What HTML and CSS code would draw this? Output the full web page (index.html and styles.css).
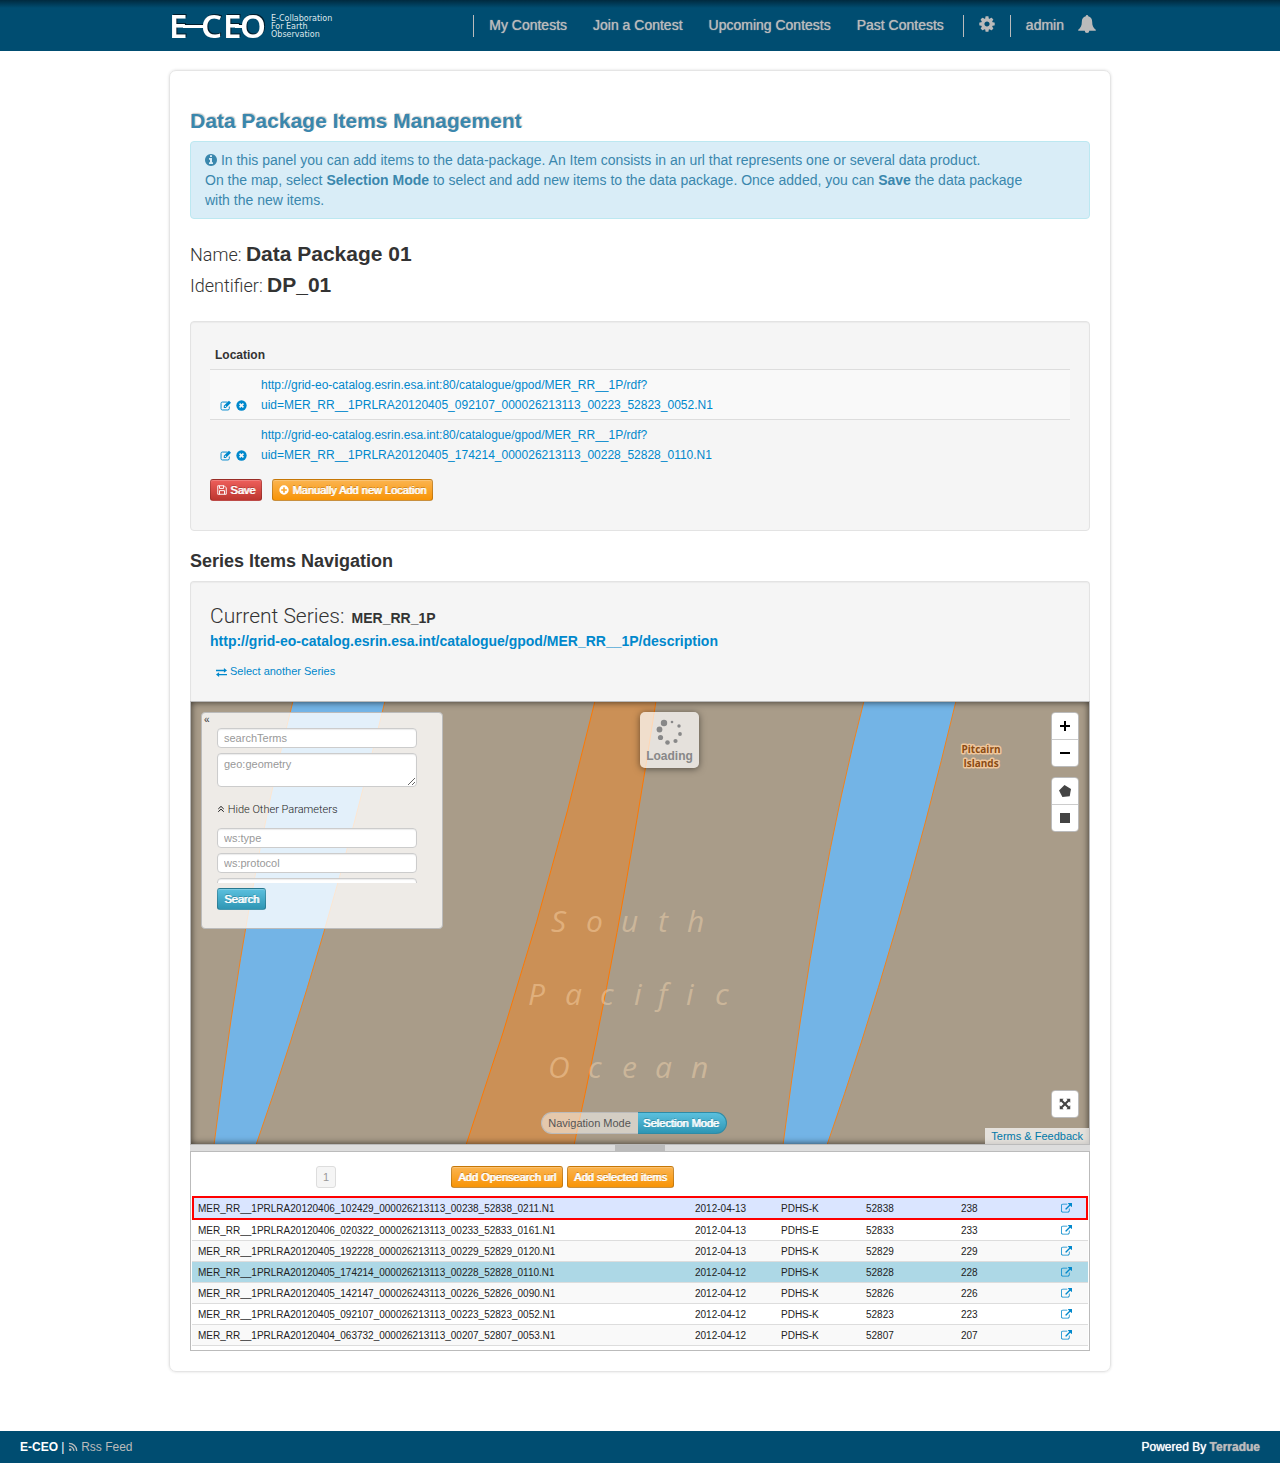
FILE: index.html
```html
<!DOCTYPE html>
<html lang="en">
<head>
<meta charset="utf-8">
<meta name="viewport" content="width=device-width, initial-scale=1">
<title>E-CEO - Data Package Items Management</title>
<link rel="stylesheet" href="styles.css">
</head>
<body>
<svg class="sprite" aria-hidden="true">
  <symbol id="i-cog" viewBox="0 0 1792 1792"><path d="M1152 896q0-106-75-181t-181-75-181 75-75 181 75 181 181 75 181-75 75-181zm512-109v222q0 12-8 23t-20 13l-185 28q-19 54-39 91 35 50 107 138 10 12 10 25t-9 23q-27 37-99 108t-94 71q-12 0-26-9l-138-108q-44 23-91 38-16 136-29 186-7 28-36 28h-222q-14 0-24.5-8.5t-11.5-21.5l-28-184q-49-16-90-37l-141 107q-10 9-25 9-14 0-25-11-126-114-165-168-7-10-7-23 0-12 8-23 15-21 51-66.5t54-70.5q-27-50-41-99l-183-27q-13-2-21-12.5t-8-23.5v-222q0-12 8-23t19-13l186-28q14-46 39-92-40-57-107-138-10-12-10-24 0-10 9-23 26-36 98.5-107.5t94.5-71.5q13 0 26 10l138 107q44-23 91-38 16-136 29-186 7-28 36-28h222q14 0 24.5 8.5t11.5 21.5l28 184q49 16 90 37l142-107q9-9 24-9 13 0 25 10 129 119 165 170 7 8 7 22 0 12-8 23-15 21-51 66.5t-54 70.5q26 50 41 98l183 28q13 2 21 12.5t8 23.5z"/></symbol>
  <symbol id="i-bell" viewBox="0 0 16 16"><path d="M8 0c.7 0 1.100.5 1.100 1.200C11.500 1.700 12.600 3.600 12.600 6c0 3.500 1 5.400 3.200 7.200V14H10a2 2 0 0 1-4 0H.2v-.8C2.400 11.400 3.400 9.500 3.400 6c0-2.400 1.100-4.300 3.500-4.800C6.900.5 7.300 0 8 0z"/></symbol>
  <symbol id="i-info" viewBox="128 128 1536 1536"><path d="M1152 1376v-160q0-14-9-23t-23-9h-96v-512q0-14-9-23t-23-9h-320q-14 0-23 9t-9 23v160q0 14 9 23t23 9h96v320h-96q-14 0-23 9t-9 23v160q0 14 9 23t23 9h448q14 0 23-9t9-23zm-128-896v-160q0-14-9-23t-23-9h-192q-14 0-23 9t-9 23v160q0 14 9 23t23 9h192q14 0 23-9t9-23zm640 416q0 209-103 385.500t-279.500 279.500-385.500 103-385.500-103-279.500-279.500-103-385.500 103-385.500 279.500-279.500 385.500-103 385.500 103 279.500 279.500 103 385.500z"/></symbol>
  <symbol id="i-ext" viewBox="0 0 1792 1792"><path d="M1408 928v320q0 119-84.500 203.500t-203.500 84.500h-832q-119 0-203.500-84.500t-84.500-203.500v-832q0-119 84.500-203.500t203.500-84.500h704q14 0 23 9t9 23v64q0 14-9 23t-23 9h-704q-66 0-113 47t-47 113v832q0 66 47 113t113 47h832q66 0 113-47t47-113v-320q0-14 9-23t23-9h64q14 0 23 9t9 23zm384-864v512q0 26-19 45t-45 19-45-19l-176-176-652 652q-10 10-23 10t-23-10l-114-114q-10-10-10-23t10-23l652-652-176-176q-19-19-19-45t19-45 45-19h512q26 0 45 19t19 45z"/></symbol>
  <symbol id="i-edit" viewBox="0 0 16 16"><path d="M11 3H3.500A2 2 0 0 0 1.500 5v7.500a2 2 0 0 0 2 2h8a2 2 0 0 0 2-2V9.500" fill="none" stroke="currentColor" stroke-width="1.400"/><path fill-rule="evenodd" d="M5.500 11.500V8.500L13 1l3 3-7.500 7.500zM7 9v1.200h1.200l1-1-1.300-1.200z"/></symbol>
  <symbol id="i-remove" viewBox="0 0 16 16"><circle cx="8" cy="8" r="7.500"/><path d="M5.200 5.200l5.600 5.600M10.800 5.200l-5.600 5.600" stroke="#f7f7f7" stroke-width="2.400"/></symbol>
  <symbol id="i-save" viewBox="0 0 16 16"><path d="M1.200 1.200h10.300l3.300 3.300v10.300H1.200zM4 1.200v4.300h6.500V1.200M4 14.800V9h8v5.800" fill="none" stroke="currentColor" stroke-width="1.500"/></symbol>
  <symbol id="i-plus" viewBox="0 0 16 16"><path fill-rule="evenodd" d="M8 .5a7.500 7.500 0 1 1 0 15 7.500 7.500 0 0 1 0-15zM6.700 3.500v3.200H3.500v2.600h3.200v3.200h2.600V9.300h3.200V6.700H9.300V3.500z"/></symbol>
  <symbol id="i-exchange" viewBox="0 0 16 16"><path d="M0 4h11.500V1.500L16 5l-4.500 3.500V6H0zM16 10H4.500V7.500L0 11l4.500 3.500V12H16z"/></symbol>
  <symbol id="i-rss" viewBox="0 0 16 16"><circle cx="3.500" cy="12.500" r="2"/><path d="M1.500 6.500a8 8 0 0 1 8 8M1.500 2a12.500 12.500 0 0 1 12.500 12.500" fill="none" stroke="currentColor" stroke-width="2"/></symbol>
  <symbol id="i-up" viewBox="0 0 16 16"><path d="M2.500 8L8 2.800 13.500 8M2.500 13.500L8 8.300l5.500 5.200" fill="none" stroke="currentColor" stroke-width="2"/></symbol>
  <symbol id="i-full" viewBox="0 0 16 16"><path d="M1 1h5.200L4.600 2.600 8 6l3.400-3.400L9.800 1H15v5.200l-1.600-1.600L10 8l3.400 3.400L15 9.800V15H9.800l1.600-1.600L8 10l-3.400 3.400L6.200 15H1V9.800l1.600 1.600L6 8 2.600 4.600 1 6.200z"/></symbol>
</svg>

<header class="navbar">
  <div class="container navbar-inner">
    <a class="brand" href="#" aria-label="E-CEO">
      <svg class="brand-mark" viewBox="0 0 96 28" aria-hidden="true">
        <text x="-2" y="26">E</text>
        <rect x="12" y="13" width="22" height="3"/>
        <text x="30" y="26">C</text>
        <text x="52" y="26">E</text>
        <rect x="64" y="13" width="10" height="3"/>
        <text x="69" y="26">O</text>
      </svg>
      <span class="brand-text">E-Collaboration<br>For Earth<br>Observation</span>
    </a>
    <nav class="nav">
      <a href="#">My Contests</a>
      <a href="#">Join a Contest</a>
      <a href="#">Upcoming Contests</a>
      <a href="#">Past Contests</a>
      <a class="nav-cog" href="#" aria-label="Settings"><svg class="icon-lg"><use href="#i-cog"/></svg></a>
      <a class="nav-user" href="#">admin</a>
      <a class="nav-bell" href="#" aria-label="Notifications"><svg class="icon-lg"><use href="#i-bell"/></svg></a>
    </nav>
  </div>
</header>

<main class="container card">
  <h1>Data Package Items Management</h1>
  <div class="alert">
    <p><svg class="icon-info"><use href="#i-info"/></svg> In this panel you can add items to the data-package. An Item consists in an url that represents one or several data product.</p>
    <p>On the map, select <strong>Selection Mode</strong> to select and add new items to the data package. Once added, you can <strong>Save</strong> the data package with the new items.</p>
  </div>

  <div class="meta">
    <p>Name: <strong>Data Package 01</strong></p>
    <p>Identifier: <strong>DP_01</strong></p>
  </div>

  <section class="well">
    <table class="locations">
      <thead><tr><th colspan="2">Location</th></tr></thead>
      <tbody>
        <tr>
          <td class="tools"><a href="#" aria-label="Edit"><svg class="icon"><use href="#i-edit"/></svg></a><a href="#" aria-label="Remove"><svg class="icon"><use href="#i-remove"/></svg></a></td>
          <td><a href="#">http://grid-eo-catalog.esrin.esa.int:80/catalogue/gpod/MER_RR__1P/rdf?<br>uid=MER_RR__1PRLRA20120405_092107_000026213113_00223_52823_0052.N1</a></td>
        </tr>
        <tr>
          <td class="tools"><a href="#" aria-label="Edit"><svg class="icon"><use href="#i-edit"/></svg></a><a href="#" aria-label="Remove"><svg class="icon"><use href="#i-remove"/></svg></a></td>
          <td><a href="#">http://grid-eo-catalog.esrin.esa.int:80/catalogue/gpod/MER_RR__1P/rdf?<br>uid=MER_RR__1PRLRA20120405_174214_000026213113_00228_52828_0110.N1</a></td>
        </tr>
      </tbody>
    </table>
    <div class="actions">
      <button class="btn btn-danger" type="button"><svg class="icon-sm"><use href="#i-save"/></svg> Save</button>
      <button class="btn btn-warning" type="button"><svg class="icon-sm"><use href="#i-plus"/></svg> Manually Add new Location</button>
    </div>
  </section>

  <h2>Series Items Navigation</h2>
  <section class="well series">
    <p class="current">Current Series: <strong>MER_RR_1P</strong></p>
    <a class="series-url" href="#">http://grid-eo-catalog.esrin.esa.int/catalogue/gpod/MER_RR__1P/description</a>
    <a class="series-select" href="#"><svg class="icon"><use href="#i-exchange"/></svg>Select another Series</a>
  </section>

  <section class="map" aria-label="Map">
    <svg class="map-canvas" viewBox="0 0 898 442" preserveAspectRatio="xMidYMid slice">
      <g class="swath-blue">
        <path d="M102 -1Q56 178 23 443L65 443Q136 240 194 -1z"/>
        <path d="M673 -1Q626 178 592 443L636 443Q707 240 765 -1z"/>
      </g>
      <path class="swath-orange" d="M404 -1Q352 218 275 443L383 443Q428 240 465 -1z"/>
      <g class="sea">
        <text x="360 395 430 467 496" y="230">South</text>
        <text x="337 374 409 443 467 495 524" y="303">Pacific</text>
        <text x="357 397 431 464 500" y="376">Ocean</text>
      </g>
      <g class="place">
        <text x="790" y="51">Pitcairn</text>
        <text x="790" y="65">Islands</text>
      </g>
    </svg>

    <form class="search">
      <button class="collapse" type="button" aria-label="Collapse">«</button>
      <input type="text" placeholder="searchTerms" aria-label="searchTerms">
      <textarea placeholder="geo:geometry" aria-label="geo:geometry"></textarea>
      <a class="toggle-params" href="#"><svg class="icon-xs"><use href="#i-up"/></svg> Hide Other Parameters</a>
      <div class="params">
        <input type="text" placeholder="ws:type" aria-label="ws:type">
        <input type="text" placeholder="ws:protocol" aria-label="ws:protocol">
        <input type="text" aria-label="ws:other">
      </div>
      <button class="btn btn-info" type="button">Search</button>
    </form>

    <div class="loading" role="status">
      <svg class="spinner" viewBox="0 0 28 28"><circle cx="8" cy="5" r="3.200"/><circle cx="16" cy="4" r="1.300"/><circle cx="23" cy="8" r="1.700"/><circle cx="24" cy="16" r="1.900"/><circle cx="19.500" cy="23" r="2.100"/><circle cx="11.500" cy="24.500" r="2.300"/><circle cx="4.500" cy="19.500" r="2.600"/><circle cx="3.500" cy="11.500" r="2.900"/></svg>
      Loading
    </div>

    <div class="controls">
      <div class="bar">
        <button type="button" aria-label="Zoom in"><svg viewBox="0 0 10 10"><path d="M4 0h2v4h4v2H6v4H4V6H0V4h4z"/></svg></button>
        <button type="button" aria-label="Zoom out"><svg viewBox="0 0 10 10"><path d="M0 4h10v2H0z"/></svg></button>
      </div>
      <div class="bar draw">
        <button type="button" aria-label="Draw polygon"><svg class="shape" viewBox="0 0 12 12"><path d="M5.500 0L12 4l-1.300 7.300L3.400 12 0 5.500z"/></svg></button>
        <button type="button" aria-label="Draw rectangle"><svg viewBox="0 0 10 10"><path d="M0 0h10v10H0z"/></svg></button>
      </div>
      <div class="bar draw full">
        <button type="button" aria-label="Full screen"><svg class="shape"><use href="#i-full"/></svg></button>
      </div>
    </div>

    <div class="modes">
      <button type="button">Navigation Mode</button>
      <button class="on" type="button">Selection Mode</button>
    </div>
    <a class="terms" href="#">Terms &amp; Feedback</a>
  </section>
  <div class="splitter"><span></span></div>

  <section class="results">
    <div class="toolbar">
      <button class="page" type="button">1</button>
      <button class="btn btn-warning" type="button">Add Opensearch url</button>
      <button class="btn btn-warning" type="button">Add selected items</button>
    </div>
    <table class="items">
      <colgroup><col><col class="c-date"><col class="c-station"><col class="c-orbit"><col class="c-track"><col class="c-link"></colgroup>
      <tbody>
        <tr class="selected"><td>MER_RR__1PRLRA20120406_102429_000026213113_00238_52838_0211.N1</td><td>2012-04-13</td><td>PDHS-K</td><td>52838</td><td>238</td><td><a href="#" aria-label="Open"><svg class="icon-link"><use href="#i-ext"/></svg></a></td></tr>
        <tr><td>MER_RR__1PRLRA20120406_020322_000026213113_00233_52833_0161.N1</td><td>2012-04-13</td><td>PDHS-E</td><td>52833</td><td>233</td><td><a href="#" aria-label="Open"><svg class="icon-link"><use href="#i-ext"/></svg></a></td></tr>
        <tr><td>MER_RR__1PRLRA20120405_192228_000026213113_00229_52829_0120.N1</td><td>2012-04-13</td><td>PDHS-K</td><td>52829</td><td>229</td><td><a href="#" aria-label="Open"><svg class="icon-link"><use href="#i-ext"/></svg></a></td></tr>
        <tr class="added"><td>MER_RR__1PRLRA20120405_174214_000026213113_00228_52828_0110.N1</td><td>2012-04-12</td><td>PDHS-K</td><td>52828</td><td>228</td><td><a href="#" aria-label="Open"><svg class="icon-link"><use href="#i-ext"/></svg></a></td></tr>
        <tr><td>MER_RR__1PRLRA20120405_142147_000026243113_00226_52826_0090.N1</td><td>2012-04-12</td><td>PDHS-K</td><td>52826</td><td>226</td><td><a href="#" aria-label="Open"><svg class="icon-link"><use href="#i-ext"/></svg></a></td></tr>
        <tr><td>MER_RR__1PRLRA20120405_092107_000026213113_00223_52823_0052.N1</td><td>2012-04-12</td><td>PDHS-K</td><td>52823</td><td>223</td><td><a href="#" aria-label="Open"><svg class="icon-link"><use href="#i-ext"/></svg></a></td></tr>
        <tr><td>MER_RR__1PRLRA20120404_063732_000026213113_00207_52807_0053.N1</td><td>2012-04-12</td><td>PDHS-K</td><td>52807</td><td>207</td><td><a href="#" aria-label="Open"><svg class="icon-link"><use href="#i-ext"/></svg></a></td></tr>
      </tbody>
    </table>
  </section>
</main>

<footer class="footer">
  <div><strong>E-CEO</strong> | <a href="#"><svg class="icon-sm"><use href="#i-rss"/></svg> Rss Feed</a></div>
  <div class="powered">Powered By <a href="#"><strong>Terradue</strong></a></div>
</footer>
</body>
</html>
```

FILE: styles.css
```css
* { box-sizing: border-box; }

body {
  margin: 0;
  background: #fff;
  color: #333;
  font: 14px/20px "Liberation Sans", Helvetica, Arial, sans-serif;
}

a { color: #0088cc; text-decoration: none; }
button, input, textarea { font-family: inherit; margin: 0; }
svg { fill: currentColor; }
p { margin: 0; }

.sprite { display: none; }
.container { max-width: 942px; margin: 0 auto; }

.icon { width: 11px; height: 11px; vertical-align: middle; }
.icon-lg { width: 18px; height: 18px; }
.icon-sm { width: 10px; height: 10px; vertical-align: -1px; }
.icon-xs { width: 8px; height: 8px; }
.icon-link { display: block; width: 11px; height: 11px; }
.icon-info { width: 12px; height: 12px; vertical-align: -1px; }

/* Top bar */
.navbar { background: linear-gradient(#002a3f, #004d71 8px); }
.navbar-inner {
  display: flex;
  justify-content: space-between;
  align-items: center;
  min-height: 51px;
  padding: 0 15px 0 2px;
}
.brand { display: flex; gap: 4px; color: #fff; }
.brand-mark {
  width: 96px;
  height: 28px;
  overflow: visible;
  font: 600 33px "Noto Sans", sans-serif;
  filter: drop-shadow(1px -1px 0 #001c2b);
}
.brand-text { font: 8px/8px "DejaVu Sans", sans-serif; color: #dfe8ec; padding-top: 3px; }
.nav {
  display: flex;
  align-items: flex-start;
  height: 22px;
  border-left: 1px solid #bbb;
  padding-left: 15px;
}
.nav a { color: #bbb; line-height: 20px; margin-right: 26px; text-shadow: 0 0 1px #bbb; }
.nav .icon-lg { display: block; }
.nav .nav-cog {
  border-left: 1px solid #bbb;
  border-right: 1px solid #bbb;
  padding: 0 14px;
  margin: 0 15px 0 -7px;
  height: 22px;
}
.nav .nav-user { margin-right: 14px; }
.nav .nav-bell { margin-right: 0; }

/* Page card */
.card {
  margin-top: 19px;
  margin-bottom: 59px;
  padding: 30px 20px 20px;
  border: 1px solid #e5e5e5;
  border-radius: 7px;
  box-shadow: 0 0 3px #ddd;
}
h1 {
  margin: 0;
  font-size: 21px;
  line-height: 40px;
  color: #3a87ad;
  text-shadow: 1px -1px 1px #ccc;
}
h2 { margin: 10px 0 0; font-size: 18px; line-height: 40px; }
.alert {
  padding: 8px 42px 8px 14px;
  border: 1px solid #bce8f1;
  border-radius: 4px;
  background: #d9edf7;
  color: #3a87ad;
}
.meta { margin: 20px 0; font: 300 18px/31px Roboto, sans-serif; }
.meta strong { font: bold 21px/20px "Liberation Sans", sans-serif; }

.well {
  padding: 19px;
  border: 1px solid #e3e3e3;
  border-radius: 4px;
  background: #f5f5f5;
  box-shadow: inset 0 1px 1px #ebebeb;
}
.locations { width: 100%; border-spacing: 0; font-size: 12px; }
.locations th { text-align: left; padding: 4px 5px; }
.locations td { height: 50px; border-top: 1px solid #ddd; padding: 4px 5px; vertical-align: bottom; }
.locations tbody tr:first-child td { background: #f9f9f9; }
.locations .tools { width: 46px; padding-left: 10px; }
.tools a { margin-right: 5px; }
.tools a + a { margin: 0; }
.actions { display: flex; gap: 10px; margin: 10px 0; }

.btn {
  height: 22px;
  padding: 0 6px;
  border: 1px solid rgba(0, 0, 0, .2);
  border-radius: 3px;
  font-size: 11px;
  line-height: 20px;
  color: #fff;
  text-shadow: 1px 0 0 currentColor, 0 -1px 0 rgba(0, 0, 0, .25);
  box-shadow: inset 0 1px 0 rgba(255, 255, 255, .2);
}
.btn-danger { background: linear-gradient(#ee5f5b, #bd362f); }
.btn-warning { background: linear-gradient(#fbb450, #f89406); }
.btn-info { background: linear-gradient(#5bc0de, #2f96b4); }

.series { border-radius: 4px 4px 0 0; border-bottom: 0; padding-bottom: 20px; }
.series a { display: block; }
.current { font: 300 21px/30px Roboto, sans-serif; }
.current strong { margin-left: 2px; font: bold 14px/20px "Liberation Sans", sans-serif; }
.series-url { font-weight: bold; }
.series .series-select { margin: 10px 0 0 6px; font-size: 11px; }
.series-select .icon { margin-right: 3px; }

/* Map with its overlays */
.map {
  position: relative;
  height: 444px;
  border: 1px solid #bbb;
  background: #a99c89;
  overflow: hidden;
}
.map::after {
  content: "";
  position: absolute;
  inset: 0;
  box-shadow: inset 0 0 7px rgba(0, 0, 0, .7);
  pointer-events: none;
}
.map-canvas { position: absolute; width: 100%; height: 100%; }
.swath-blue { fill: #73b4e6; stroke: #f0821e; }
.swath-orange { fill: #cb9056; stroke: #ff7800; }
.sea {
  font: italic 30px "Open Sans", "Noto Sans", sans-serif;
  fill: rgba(255, 222, 180, .42);
}
.place {
  font: bold 10px "Open Sans", "Noto Sans", sans-serif;
  fill: #8a4b14;
  stroke: #f0c79c;
  stroke-width: 3px;
  stroke-linejoin: round;
  paint-order: stroke;
  text-anchor: middle;
}

.search {
  position: absolute;
  top: 10px;
  left: 10px;
  width: 242px;
  padding: 15px 25px 18px 15px;
  border: 1px solid #bbb;
  border-radius: 4px;
  background: rgba(255, 255, 255, .8);
}
.search input, .search textarea {
  display: block;
  width: 100%;
  height: 20px;
  margin-bottom: 5px;
  padding: 0 6px;
  border: 1px solid #ccc;
  border-radius: 4px;
  background: #fff;
  font-size: 11px;
  line-height: 18px;
  box-shadow: inset 0 1px 1px #ececec;
}
.search textarea { height: 34px; padding-top: 1px; resize: vertical; }
.search ::placeholder { color: #999; opacity: 1; }
.collapse {
  position: absolute;
  top: 0;
  left: 2px;
  padding: 0;
  border: 0;
  background: none;
  font-size: 10px;
  line-height: 14px;
  color: #333;
}
.toggle-params { display: block; margin: 13px 0 8px; font: 300 11px/20px Roboto, sans-serif; color: #222; }
.params { height: 55px; overflow: hidden; margin-bottom: 5px; }

.loading {
  position: absolute;
  top: 10px;
  left: 50%;
  width: 59px;
  padding: 6px 0 2px;
  border-radius: 5px;
  background: rgba(255, 255, 255, .7);
  box-shadow: 0 1px 7px rgba(0, 0, 0, .5);
  font-size: 12px;
  line-height: 20px;
  font-weight: bold;
  color: #888;
  text-align: center;
}
.spinner { display: block; width: 28px; height: 28px; margin: 0 auto; }

.controls {
  position: absolute;
  top: 10px;
  right: 10px;
  bottom: 26px;
  display: flex;
  flex-direction: column;
  gap: 10px;
}
.bar { border: 1px solid #bbb; border-radius: 4px; overflow: hidden; }
.bar button {
  display: flex;
  align-items: center;
  justify-content: center;
  width: 26px;
  height: 26px;
  padding: 0;
  border: 0;
  background: #fff;
  color: #000;
}
.bar button + button { height: 27px; border-top: 1px solid #ccc; }
.bar svg { width: 10px; height: 10px; }
.bar .shape { width: 12px; height: 12px; }
.draw button { color: #444; }
.full { margin-top: auto; }

.modes {
  position: absolute;
  bottom: 10px;
  left: 0;
  right: 12px;
  display: flex;
  justify-content: center;
}
.modes button {
  height: 22px;
  padding: 0 7px 0 6px;
  border: 1px solid #bbb;
  border-right: 0;
  border-radius: 11px 0 0 11px;
  background: rgba(255, 255, 255, .5);
  font-size: 11px;
  color: #555;
}
.modes .on {
  padding: 0 7px 0 5px;
  border: 1px solid #2f8ba6;
  border-left: 0;
  border-radius: 0 11px 11px 0;
  background: linear-gradient(#5bc0de, #2f96b4);
  color: #fff;
  text-shadow: 1px 0 0 currentColor, 0 -1px 0 rgba(0, 0, 0, .25);
}
.terms {
  position: absolute;
  right: 0;
  bottom: 0;
  z-index: 1;
  padding: 0 6px;
  background: rgba(255, 255, 255, .7);
  font-size: 11px;
  line-height: 16px;
  color: #0078a8;
}
.splitter { background: #ddd; }
.splitter span { display: block; width: 50px; height: 6px; margin: 0 auto; background: #bbb; }

/* Result list */
.results { border: 1px solid #bbb; padding: 0 1px 4px; }
.toolbar { display: flex; align-items: center; gap: 4px; height: 44px; padding: 6px 0 0 124px; }
.page {
  width: 20px;
  height: 22px;
  margin-right: 111px;
  padding: 0;
  border: 1px solid #ddd;
  border-radius: 3px;
  background: #f5f5f5;
  font-size: 11px;
  color: #999;
}
.items {
  width: 100%;
  table-layout: fixed;
  border-spacing: 0;
  font-size: 10px;
  line-height: 18px;
}
.items td { height: 21px; padding: 2px 5px 0; border-top: 1px solid #ddd; color: #222; }
.items td:first-child { padding-left: 6px; }
.items td:last-child { padding-top: 0; }
.items tr:nth-child(odd) td { background: #f9f9f9; }
.items tr:nth-child(2) td { height: 20px; border-top: 0; }
.items tr:last-child td { height: 22px; border-bottom: 1px solid #ddd; }
.items tr.added td { background: #add8e6; }
.items tr.selected { outline: 2px solid #f00; outline-offset: -2px; }
.items tr.selected td { height: 24px; border-top: 0; background: #dae5ff; }
.c-date { width: 86px; }
.c-station { width: 85px; }
.c-orbit { width: 95px; }
.c-track { width: 100px; }
.c-link { width: 32px; }

.footer {
  display: flex;
  justify-content: space-between;
  padding: 6px 20px;
  background: #004d71;
  color: #fff;
  font-size: 12px;
}
.footer a { color: #bbb; }
.powered { text-shadow: 0 0 1px currentColor; }
```
